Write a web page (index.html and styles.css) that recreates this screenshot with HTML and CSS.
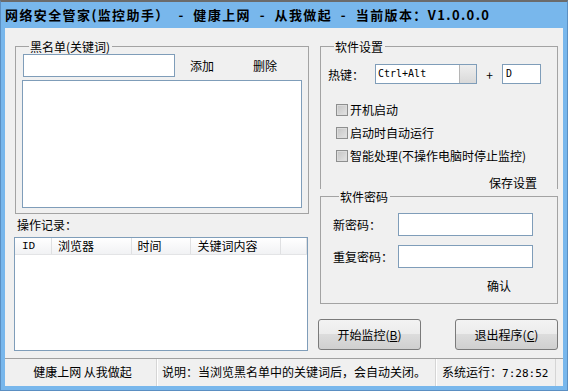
FILE: index.html
```html
<!DOCTYPE html>
<html lang="zh-CN">
<head>
    <meta charset="UTF-8">
    <title>网络安全管家</title>
    <link rel="stylesheet" href="styles.css">
</head>
<body>
    <div class="window">
        <div class="titlebar">网络安全管家(监控助手） &nbsp;- &nbsp;健康上网 &nbsp;- &nbsp;从我做起 &nbsp;- &nbsp;当前版本：V1.0.0.0</div>
        <div class="client">
            <div class="main">
                <div class="left">
                    <fieldset class="group blacklist">
                        <legend>黑名单(关键词)</legend>
                        <div class="kw-row">
                            <input type="text" class="edit kw-input">
                            <span class="link add">添加</span>
                            <span class="link del">删除</span>
                        </div>
                        <div class="listbox"></div>
                    </fieldset>
                    <div class="log-label">操作记录：</div>
                    <div class="listview">
                        <div class="lv-head">
                            <span class="col col-id">ID</span>
                            <span class="col col-browser">浏览器</span>
                            <span class="col col-time">时间</span>
                            <span class="col col-kw">关键词内容</span>
                            <span class="col col-rest"></span>
                        </div>
                    </div>
                </div>

                <div class="right">
                    <fieldset class="group settings">
                        <legend>软件设置</legend>
                        <div class="hotkey-row">
                            <span class="hk-label">热键：</span>
                            <div class="combo">
                                <span class="combo-text">Ctrl+Alt</span>
                                <span class="combo-btn"></span>
                            </div>
                            <span class="plus">+</span>
                            <div class="edit key-edit">D</div>
                        </div>
                        <div class="check-row"><span class="checkbox"></span>开机启动</div>
                        <div class="check-row"><span class="checkbox"></span>启动时自动运行</div>
                        <div class="check-row"><span class="checkbox"></span>智能处理(不操作电脑时停止监控)</div>
                        <div class="save-row"><span class="link">保存设置</span></div>
                    </fieldset>

                    <fieldset class="group password">
                        <legend>软件密码</legend>
                        <div class="pw-row">
                            <span class="pw-label">新密码：</span>
                            <input type="password" class="edit pw-input">
                        </div>
                        <div class="pw-row">
                            <span class="pw-label">重复密码：</span>
                            <input type="password" class="edit pw-input">
                        </div>
                        <div class="confirm-row"><span class="link">确认</span></div>
                    </fieldset>

                    <div class="buttons">
                        <button class="btn">开始监控(<u>B</u>)</button>
                        <button class="btn">退出程序(<u>C</u>)</button>
                    </div>
                </div>
            </div>

            <div class="statusbar">
                <div class="panel panel-motto">健康上网 从我做起</div>
                <div class="panel panel-note">说明：当浏览黑名单中的关键词后，会自动关闭。</div>
                <div class="panel panel-time">系统运行：<span class="mono">7:28:52</span></div>
                <div class="panel panel-end"></div>
            </div>
        </div>
    </div>
</body>
</html>
```

FILE: styles.css
```css
* {
    box-sizing: border-box;
}
body {
    margin: 0;
    font-family: "Noto Sans CJK SC", "Liberation Sans", sans-serif;
    font-size: 12px;
    color: #000;
    background: #fff;
}
.window {
    width: 568px;
    height: 391px;
    background: #78b7ec;
    border: 1px solid #5b8fc2;
    border-top: 2px solid #6b6b6b;
    padding: 0 4px 4px;
}
.titlebar {
    height: 26px;
    line-height: 25px;
    font-size: 13px;
    font-weight: bold;
    letter-spacing: 1.4px;
    white-space: nowrap;
}
.client {
    height: 358px;
    background: #f0f0f0;
    display: flex;
    flex-direction: column;
}
.main {
    flex: 1;
    display: flex;
    gap: 9px;
    padding: 11px 0 0 9px;
}
.left {
    width: 295px;
}
.right {
    width: 240px;
}

/* group boxes */
.group {
    margin: 0;
    border: 1px solid #a3a3a3;
    padding: 0;
    min-width: 0;
}
.group legend {
    line-height: 15px;
    padding: 0 2px 0 1px;
    margin-left: 6px;
}
.edit {
    border: 1px solid #7f9db9;
    background: #fff;
    height: 23px;
    margin: 0;
    padding: 0 3px;
    font: inherit;
    outline: none;
}

/* blacklist */
.blacklist {
    margin-left: 1px;
    width: 294px;
    padding: 0 6px 5px 7px;
}
.kw-row {
    display: flex;
    align-items: center;
}
.kw-input {
    width: 152px;
}
.link {
    line-height: 14px;
}
.add {
    margin-left: 15px;
}
.del {
    margin-left: 39px;
}
.listbox {
    margin: 3px 0 0 -1px;
    width: 280px;
    height: 128px;
    border: 1px solid #7f9db9;
    background: #fff;
}
.log-label {
    line-height: 14px;
    margin-top: 4px;
    padding-left: 3px;
}
.listview {
    margin-top: 5px;
    width: 294px;
    height: 114px;
    border: 1px solid #7f9db9;
    background: #fff;
}
.lv-head {
    display: flex;
    height: 17px;
    background: linear-gradient(#ffffff, #f1f2f4);
    border-bottom: 1px solid #e3e4e6;
}
.col {
    line-height: 16px;
    padding-left: 6px;
    border-right: 1px solid #dfe0e2;
    white-space: nowrap;
}
.col-id {
    width: 37px;
    padding-left: 7px;
    font-family: "Liberation Mono", monospace;
    font-size: 11px;
}
.col-browser {
    width: 80px;
}
.col-time {
    width: 60px;
}
.col-kw {
    width: 90px;
}
.col-rest {
    width: 26px;
}

/* settings */
.settings {
    margin-left: 2px;
    width: 238px;
    height: 150px;
    border-bottom: none;
    padding: 10px 0 0 7px;
}
.hotkey-row {
    display: flex;
    align-items: center;
    height: 20px;
}
.hk-label {
    width: 47px;
}
.combo {
    width: 102px;
    height: 20px;
    border: 1px solid #7f9db9;
    background: #fff;
    display: flex;
}
.combo-text,
.key-edit,
.mono {
    font-family: "DejaVu Sans Mono", monospace;
    font-size: 10px;
}
.combo-text {
    flex: 1;
    line-height: 18px;
    padding-left: 2px;
}
.combo-btn {
    width: 17px;
    background: linear-gradient(#eeeeee, #d9d9d9);
    border-left: 1px solid #b5b5b5;
}
.plus {
    width: 25px;
    text-align: center;
}
.key-edit {
    width: 39px;
    height: 20px;
    line-height: 18px;
    padding: 0 3px;
}
.check-row {
    display: flex;
    align-items: center;
    height: 23px;
    padding-left: 8px;
}
.hotkey-row + .check-row {
    margin-top: 14px;
}
.checkbox {
    width: 12px;
    height: 12px;
    margin-right: 2px;
    border: 1px solid #8e8f8f;
    background: linear-gradient(135deg, #c4c4c4, #e4e4e4);
    box-shadow: inset 0 0 0 1px #dcdcdc;
}
.save-row {
    margin-top: 7px;
    text-align: right;
    padding-right: 20px;
}

/* password */
.password {
    margin-left: 2px;
    width: 238px;
    height: 115px;
    padding: 9px 0 0 12px;
}
.pw-row {
    display: flex;
    align-items: center;
    margin-bottom: 9px;
}
.pw-label {
    width: 65px;
}
.pw-input {
    width: 135px;
}
.confirm-row {
    margin-top: 1px;
    padding-left: 154px;
}

.buttons {
    display: flex;
    justify-content: space-between;
    margin-top: 15px;
}
.btn {
    width: 103px;
    height: 31px;
    font: inherit;
    color: #000;
    border: 1px solid #7a7a7a;
    border-radius: 3px;
    background: linear-gradient(#f3f3f3, #ebebeb 50%, #dcdcdc 50%, #cfcfcf);
    padding: 0;
}
.btn u {
    text-decoration: underline;
}

/* status bar */
.statusbar {
    height: 28px;
    border-top: 1px solid #a0a0a0;
    display: flex;
    align-items: stretch;
}
.panel {
    line-height: 26px;
    white-space: nowrap;
}
.panel-motto {
    width: 151px;
    text-align: center;
    padding-left: 4px;
}
.panel-note {
    width: 279px;
    padding-left: 5px;
    border-left: 1px solid #d5d5d5;
    box-shadow: inset 1px 0 #fff;
}
.panel-time {
    width: 120px;
    padding-left: 6px;
    border-left: 1px solid #d5d5d5;
    box-shadow: inset 1px 0 #fff;
}
.panel-time .mono {
    font-size: 11px;
}
.panel-end {
    flex: 1;
    border-left: 1px solid #d5d5d5;
}
```
